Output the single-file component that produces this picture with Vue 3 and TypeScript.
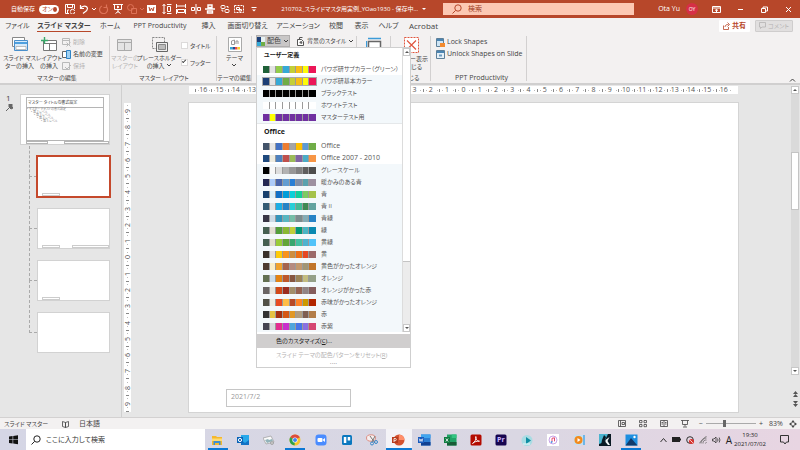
<script setup lang="ts">
import { ref } from 'vue'

interface Palette {
  name: string
  colors: string[]
  selected?: boolean
  tint?: boolean
}

const p = (name: string, colors: string, tint = false, selected = false): Palette => ({
  name,
  colors: colors.split(' ').map((c) => '#' + c),
  tint,
  selected,
})

const custom: Palette[] = [
  p('パワポ研サブカラー（グリーン）', '1f6138 e3e3e3 92cc4a 35a9d6 c3cf38 f8bd15 fdfb08 ec1758'),
  p('パワポ研基本カラー', '1b3e75 e3e3e3 35a9d6 70ad47 c3cf38 f8bd15 fdfb08 ec1758', true, true),
  p('ブラックテスト', '000000 000000 000000 000000 000000 000000 000000 000000', true),
  p('ホワイトテスト', 'ffffff ffffff ffffff ffffff ffffff ffffff ffffff ffffff', true),
  p('マスターテスト用', '7030a0 ffff00 7030a0 7030a0 7030a0 7030a0 7030a0 7030a0', true),
]

const office: Palette[] = [
  p('Office', '44546a e7e6e6 4472c4 ed7d31 a5a5a5 ffc000 5b9bd5 70ad47'),
  p('Office 2007 - 2010', '1f497d eeece1 4f81bd c0504d 9bbb59 8064a2 4bacc6 f79646'),
  p('グレースケール', '000000 f8f8f8 dddddd b2b2b2 969696 808080 5f5f5f 4d4d4d', true),
  p('暖かみのある青', '242852 accbf9 4a66ac 629dd1 297fd5 7f8fa9 5aa2ae 9d90a0', true),
  p('青', '17406d dbeff9 0f6fc6 009dd9 0bd0d9 10cf9b 7cca62 a5c249', true),
  p('青 II', '335b74 dfe3e5 1cade4 2683c6 27ced7 42ba97 3e8853 62a39f', true),
  p('青緑', '373545 cedbe6 3494ba 58b6c0 75bda7 7a8c8e 84acb6 2683c6', true),
  p('緑', '455f51 e3ded1 549e39 8ab833 c0cf3a 029676 4ab5c4 0989b1', true),
  p('黄緑', '455f51 e2dfcc 99cb38 63a537 37a76f 44c1a3 4eb3cf 51c3f9', true),
  p('黄', '39302a e5dedb ffca08 f8931d ce8d3e ec7016 e64823 9c6a6a', true),
  p('黄色がかったオレンジ', '4e3b30 fbeec9 f0a22e a5644e b58b80 c3986d a19574 c17529', true),
  p('オレンジ', '637052 ccddea e48312 bd582c 865640 9b8357 c2bc80 94a088', true),
  p('オレンジがかった赤', '696464 e9e5dc d34817 9b2d1f a28e6a 956251 918485 855d5d', true),
  p('赤味がかったオレンジ', '505046 eeece1 e84c22 ffbd47 b64926 ff8427 cc9900 b22600', true),
  p('赤', '323232 e5c243 a5300f d55816 e19825 b19c7d 7f5f52 b27d49', true),
  p('赤紫', '454551 d8d9dc e32d91 c830cc 4ea6dc 4775e7 8971e1 d54773', true),
]

const isLatin = (s: string): boolean => /^[\x20-\x7e]+$/.test(s)

const tabs = [
  'ファイル', 'スライド マスター', 'ホーム', 'PPT Productivity', '挿入', '画面切り替え',
  'アニメーション', '校閲', '表示', 'ヘルプ', 'Acrobat',
]
const activeTab = ref(1)

const quick = ['textframe', 'vdist', 'hdist', 'center', 'middle', 'swap', 'group', 'more']
const hRuler = Array.from({ length: 33 }, (_, i) => Math.abs(i - 16))
const vRuler = Array.from({ length: 19 }, (_, i) => Math.abs(i - 9))

const layouts = [
  { id: 1, selected: true, date: true, footer: false },
  { id: 2, selected: false, date: true, footer: true },
  { id: 3, selected: false, date: true, footer: false },
  { id: 4, selected: false, date: false, footer: false },
]

const apps = [
  { icon: 'explorer', label: 'エクスプローラー', open: true },
  { icon: 'outlook', label: 'Outlook' },
  { icon: 'photos', label: 'フォト' },
  { icon: 'chrome', label: 'Chrome', open: true },
  { icon: 'zoom', label: 'Zoom' },
  { icon: 'trello', label: 'Trello' },
  { icon: 'snip', label: 'Snipping Tool' },
  { icon: 'ppt', label: 'PowerPoint', open: true, active: true },
  { icon: 'word', label: 'Word' },
  { icon: 'excel', label: 'Excel' },
  { icon: 'acrobat', label: 'Acrobat' },
  { icon: 'premiere', label: 'Premiere' },
  { icon: 'player', label: 'Player' },
  { icon: 'itunes', label: 'iTunes' },
  { icon: 'media', label: 'Media Player' },
  { icon: 'kindle', label: 'Kindle' },
  { icon: 'picture', label: 'ピクチャ', open: true },
]

const showTitle = ref(false)
const showFooter = ref(true)
const autosave = ref(true)
const zoomLevel = ref(36)
</script>

<template>
  <svg class="defs" aria-hidden="true">
    <defs>
      <g id="chev"><path d="M1 2l2 2 2-2" fill="none" stroke="currentColor" /></g>
      <g id="save" fill="none" stroke="currentColor"><path d="M9.500 5V.5h-9v9H4M2.500.5v3h5v-3M2.500 9V6H4" /><path d="M5.500 7.500a2 2 0 0 1 4-.5M9.500 8a2 2 0 0 1-4 .5" /></g>
      <g id="undo" fill="none" stroke="currentColor"><path d="M1.500 1v3.500H5M1.500 4.500C3 1.500 8 1 8.500 4.500 8.500 7 6 8 4 9.500" stroke-width="1.200" /></g>
      <g id="redo" fill="none" stroke="currentColor"><path d="M7.500.5v3h-3M7 2.500A4 4 0 1 1 3 2" stroke-width="1.200" /></g>
      <g id="present" fill="none" stroke="currentColor"><path d="M0 .5h10M1.500.5v5h7v-5M5 5.500v3M2.500 9.500L5 7.500l2.500 2M4.500 2v2l1.500-1z" /></g>
      <g id="shapes" fill="none" stroke="currentColor"><circle cx="3.500" cy="3.500" r="3" /><path d="M4.500 4.500h5v5h-5z" /></g>
      <g id="textframe"><path d="M0 1h9v8H0z" fill="currentColor" /><path d="M2 3l1 4 1.500-3L6 7l1-4" fill="none" stroke="#b7472a" /></g>
      <g id="vdist" fill="none" stroke="currentColor"><path d="M2 0v10M.5 2L2 .5 3.500 2M.5 8L2 9.500 3.500 8M5 .5h4.500M5 9.500h4.500M5.500 2.500h3v5h-3z" /></g>
      <g id="hdist" fill="none" stroke="currentColor"><path d="M.5 0v4M9.500 0v4M.5 2h9M1.500 5.500h7v3h-7zM.5 5v5M9.500 5v5" /></g>
      <g id="center" fill="none" stroke="currentColor"><path d="M5 0v10M.5 3.500h3v3h-3zM6.500 3.500h3v3h-3z" /></g>
      <g id="middle" fill="none" stroke="currentColor"><path d="M0 5h10M3 1h4v2.500H3zM2.500 7h5v2h-5z" stroke-width="1.400" /></g>
      <g id="swap" fill="none" stroke="currentColor"><rect x="1" y="1.500" width="4" height="3" rx="1" /><rect x="5" y="5.500" width="4" height="3" rx="1" /><path d="M6.500 2.500h1.500v1.500M3.500 7H2V5.500" /></g>
      <g id="group" fill="none" stroke="currentColor"><path d="M.5 1.500h9v7h-9z" stroke-dasharray="2 1" /><path d="M2.500 3.500h3v2h-3zM5 5.500h2.500V7H5z" /></g>
      <g id="more"><path d="M2.500 3.500h5" stroke="currentColor" /><path d="M3 5.500h4L5 7.500z" fill="currentColor" /></g>
      <g id="lens" fill="none" stroke="currentColor"><circle cx="6" cy="4" r="3.200" /><path d="M3.600 6.400L.5 9.500" /></g>
      <g id="ribbonopt" fill="none" stroke="currentColor"><path d="M.5 1.500h8v6h-8zM.5 3h8M4.500 7V4.500M3 5.500l1.500-1 1.500 1" /></g>
      <g id="restore" fill="none" stroke="currentColor"><path d="M.5 2.500h4v4h-4zM2 2.500V1h4.500v4H5" /></g>
      <g id="close"><path d="M1 1l5 5M6 1L1 6" stroke="currentColor" /></g>
      <g id="share" fill="none" stroke="currentColor"><path d="M.5 3.500v4h5V5M2 5c0-2 1.500-2.500 3.500-2.500M4.500.5l2 2-2 2" stroke-width=".8" /></g>
      <g id="comment" fill="none" stroke="currentColor"><path d="M.5.500h6v4.500H3L1.500 6.500V5h-1z" stroke-width=".8" /></g>

      <g id="master"><path d="M.5.500h12v9H.5z" fill="#fff" stroke="#888" /><path d="M2.500 3.500h13v10h-13z" fill="#d7eafa" stroke="#4a8fcb" /><path d="M3 5h12v2H3z" fill="#4ea0df" /><path d="M4 9.500h10v3H4z" fill="#fff" stroke="#999" stroke-width=".6" /></g>
      <g id="layout"><path d="M2.500 3.500h13v10h-13z" fill="#fff" stroke="#777" /><path d="M3 6.500h12M8.500 7v6" stroke="#777" /><path d="M3.500 0v7M0 3.500h7" stroke="#39a869" stroke-width="1.400" /></g>
      <g id="mlayout"><path d="M.5 2.500h14v11H.5z" fill="#e4e4e4" stroke="#aaa" /><path d="M1 5.500h13M7.500 6v7" stroke="#aaa" /></g>
      <g id="holder"><path d="M.5.500h12v11H.5z" fill="none" stroke="#888" stroke-dasharray="2 1" /><path d="M4.500 5.500h11v9h-11z" fill="#eee" stroke="#666" /><path d="M6.500 7.500h7v5h-7z" fill="#bbb" stroke="#888" /></g>
      <g id="theme"><path d="M.5.500h13v14H.5z" fill="#fff" stroke="#aaa" /><path d="M3.500 7.500V4l3-1v4.500zM8 7V4h2v3" fill="none" stroke="#999" /><path d="M2 10h2.500v2.500H2z" fill="#35a9d6" /><path d="M4.500 10H7v2.500H4.500z" fill="#244d93" /><path d="M7 10h2.500v2.500H7z" fill="#e94b4b" /><path d="M9.500 10H12v2.500H9.500z" fill="#f5d32d" /></g>
      <g id="sdelete" fill="none" stroke="#b9b9b9"><path d="M.5.500h7v6h-7zM.5 2.500h7" /><path d="M4.500 4.500l4 4M8.500 4.500l-4 4" /></g>
      <g id="rename"><path d="M.5 1.500h5v6h-5z" fill="#fff" stroke="#666" /><path d="M4.500.5h4v8h-4z" fill="#9fd0f2" stroke="#2f83c5" /></g>
      <g id="keep" fill="none" stroke="#b9b9b9"><path d="M.5.500h7v7h-7z" /><path d="M3 5l2 2 4-4" /></g>
      <g id="palette"><path d="M0 0h4v5H0z" fill="#1d3f77" /><path d="M4 0h4v5H4z" fill="#e6f0f2" /><path d="M0 5h4v4H0z" fill="#35a9d6" /><path d="M4 5h4v4H4z" fill="#70ad47" /></g>
      <g id="bg"><path d="M1.500 2.500h4l2 2v4h-6z" fill="#fff" stroke="#555" /><path d="M3.500 6a1.500 1.500 0 1 1 2 1z" fill="#666" /><path d="M3.500 2V.5h3" fill="none" stroke="#555" /></g>
      <g id="size"><path d="M2.500 4.500h12v12h-12z" fill="#fff" stroke="#666" stroke-width="1.500" /><path d="M2 1.500h13M.5 4v11" stroke="#3c9bd8" stroke-width="1.300" /></g>
      <g id="closemaster" fill="none" stroke="#e0563f"><path d="M.5.500h14v15H.5z" fill="#fff" stroke-dasharray="2 1" /><path d="M3 3.500l9 9M12 3.500l-9 9" stroke-width="1.200" /></g>
      <g id="lock"><path d="M.5.500h7v8h-7z" fill="#cfe5f5" stroke="#5d7f99" /><path d="M1 1h6v2H1z" fill="#4a84b2" /><path d="M4 5h5v4H4z" fill="#f28a2e" /></g>
      <g id="unlock"><path d="M.5.500h8v8h-8z" fill="#e5f0f8" stroke="#5d7f99" /><path d="M1 1h7v2H1z" fill="#4a84b2" /><path d="M3 4.500h3v2H3z" fill="#6b9ac0" /></g>

      <g id="book" fill="none" stroke="currentColor"><path d="M.5 1.500l3 1v5l-3-1zM6.500 1.500l-3 1v5l3-1z" stroke-width=".8" /></g>
      <g id="vnormal" fill="none" stroke="currentColor"><path d="M.5.500h7v6h-7zM2.500.500v6M4 2.500h2.500v2H4z" stroke-width=".8" /></g>
      <g id="vsort" fill="none" stroke="currentColor"><path d="M.5.500h2.500v2.200H.5zM5 .5h2.500v2.200H5zM.5 4.500h2.500v2.200H.5zM5 4.500h2.500v2.200H5z" stroke-width=".8" /></g>
      <g id="vread" fill="none" stroke="currentColor"><path d="M.5.500h7v6h-7zM4 .5v6M1.500 2.500h1.500M1.500 4h1.500M5 2.500h1.500M5 4h1.500" stroke-width=".8" /></g>
      <g id="vshow" fill="none" stroke="currentColor"><path d="M0 .5h8M1.500.500v4h5v-4M4 4.500v2M2 7h4" stroke-width=".8" /></g>
      <g id="fit"><path d="M4 0l1.500 2h-3zM4 8l1.500-2h-3zM0 4l2-1.500v3zM8 4L6 2.500v3z" fill="currentColor" /><path d="M2.500 2.500h3v3h-3z" fill="none" stroke="currentColor" stroke-width=".6" /></g>

      <g id="win" fill="#111"><path d="M0 1.500L3.600 1v3.500H0zM4.200.9L9 .2v4.300H4.200zM0 5h3.600v3.500L0 8zM4.200 5H9v4.300l-4.800-.7z" /></g>
      <g id="explorer"><path d="M1 2h4l1 1h5v8H1z" fill="#f5b82e" /><path d="M1 4.500h10V7H1z" fill="#ffdc73" /><path d="M2.500 7h7v4H8V9H4v2H2.500z" fill="#3b8ed4" /></g>
      <g id="outlook"><path d="M4 1h8v10H4z" fill="#28a8ea" /><path d="M4 6l4 3 4-3v5H4z" fill="#1373c5" /><path d="M0 3h6v6H0z" fill="#0a64b8" /><circle cx="3" cy="6" r="1.600" fill="none" stroke="#fff" /></g>
      <g id="photos"><path d="M0 4l8-2 3 6-8 2z" fill="#fafafa" stroke="#999" stroke-width=".7" /><path d="M2 6l3-1 1 1 3-1 1 2-6 2z" fill="#92b3ba" /><circle cx="9" cy="9" r="1.500" fill="#ccc" stroke="#888" stroke-width=".6" /></g>
      <g id="chrome"><circle cx="6" cy="6" r="5.500" fill="#f7c52c" /><path d="M6 6L1.200 3.300a5.500 5.500 0 0 1 9.700 0z" fill="#dd4b3e" /><path d="M6 6l-.5 5.500A5.500 5.500 0 0 1 1.200 3.300z" fill="#2da04c" /><circle cx="6" cy="6" r="2.600" fill="#fff" /><circle cx="6" cy="6" r="2" fill="#4384f3" /></g>
      <g id="zoom"><rect x=".5" y=".5" width="11" height="11" rx="3" fill="#4a8cff" /><rect x="2.500" y="4" width="5" height="4" rx="1" fill="#fff" /><path d="M8 5.500L10 4v4L8 6.500z" fill="#fff" /></g>
      <g id="trello"><rect x="1" y="1" width="10" height="10" rx="1.500" fill="#0a78bf" /><path d="M2.800 3h2.500v6H2.800zM6.700 3h2.500v3.500H6.700z" fill="#fff" /></g>
      <g id="snip"><ellipse cx="5" cy="4" rx="4.500" ry="3.200" fill="#f7efef" stroke="#d9796a" stroke-width=".8" /><path d="M4 2l5 7M9 2L6 8" stroke="#777" /><circle cx="6" cy="9.500" r="1.500" fill="none" stroke="#3a87c8" /><circle cx="10" cy="8" r="1.500" fill="none" stroke="#3a87c8" /></g>
      <g id="ppt"><circle cx="7" cy="6" r="5.500" fill="#d35230" /><path d="M7 .5A5.500 5.500 0 0 1 12.500 6H7z" fill="#ff8f6b" /><path d="M0 3h6v6H0z" fill="#b83b1d" /><path d="M2 8V4.500h1.200a1 1 0 0 1 0 2.200H2" fill="none" stroke="#fff" stroke-width=".8" /></g>
      <g id="word"><path d="M3 .5h9.500v11H3z" fill="#2b7cd3" /><path d="M3 .5h9.500v3.500H3z" fill="#41a5ee" /><path d="M3 8h9.500v3.500H3z" fill="#103f91" /><path d="M0 3h6v6H0z" fill="#185abd" /><path d="M1.200 4.500l.8 3 1-2.500 1 2.500.8-3" fill="none" stroke="#fff" stroke-width=".7" /></g>
      <g id="excel"><path d="M3 .5h9.500v11H3z" fill="#21a366" /><path d="M7.700.500h4.800V4H7.700z" fill="#33c481" /><path d="M3 8h9.500v3.500H3z" fill="#185c37" /><path d="M0 3h6v6H0z" fill="#107c41" /><path d="M1.800 4.500l2.400 3M4.200 4.500l-2.400 3" stroke="#fff" stroke-width=".8" /></g>
      <g id="acrobat"><rect x=".5" y=".5" width="11" height="11" rx="1.500" fill="#b30b00" /><path d="M2.500 9.500C5 8 6.500 5 5.800 2.500 5.500 5 7 7.500 9.500 7.200 7 7 4.500 7.600 2.500 9.500z" fill="none" stroke="#fff" stroke-width=".9" /></g>
      <g id="premiere"><rect x=".5" y=".5" width="11" height="11" rx="1.500" fill="#17054f" /></g>
      <g id="player"><circle cx="6" cy="6.500" r="5.500" fill="#a9dce3" /><path d="M5 3l5 3.500L5 10z" fill="#0d8ea3" /><path d="M2 10l7 0" stroke="#e8f8fa" /></g>
      <g id="itunes"><rect x="0" y="0" width="12" height="12" fill="#fff" /><circle cx="6" cy="6" r="4" fill="none" stroke="#b98be0" stroke-width=".8" /><path d="M5 8V4.300l2.500-.5v3.500" fill="none" stroke="#e2466f" /><circle cx="4.600" cy="8" r=".9" fill="#4a9be8" /></g>
      <g id="media"><path d="M4 1h8v10H4z" fill="#6cb6e8" /><path d="M1 1h9v10H1z" fill="#c6dff2" /><circle cx="5.500" cy="6" r="4" fill="#f28a1c" /><path d="M4.500 4l3 2-3 2z" fill="#fff" /></g>
      <g id="kindle"><path d="M0 0h12v12H0z" fill="#0b1a24" /><path d="M0 0h9L6 6l-3 3-3 1z" fill="#4bb4cf" /><path d="M5 1l2 2-1 3-2 5H2l1-5z" fill="#0b1a24" /><path d="M6.500 6l4-3-2 4 2.500 4H9L6.500 8z" fill="#f3f7f8" /></g>
      <g id="picture"><path d="M.5.500h12v11H.5z" fill="#1e8fe0" /><path d="M.5 11.500L6 4l6.500 7.500z" fill="#123a6b" /><circle cx="9.500" cy="3" r="1.200" fill="#fff" /></g>
      <g id="battery"><path d="M0 1h8v5H0z" fill="#222" /><path d="M8 2.500h1v2H8z" fill="#222" /></g>
      <g id="cloud"><circle cx="4" cy="4" r="3.300" fill="none" stroke="#333" /><circle cx="5.500" cy="5.500" r="2.500" fill="#d9322e" /><path d="M4.200 4.200l2.600 2.600" stroke="#fff" stroke-width=".8" /></g>
      <g id="wifi" fill="none" stroke="#666"><path d="M0 7.500L7.500 0M2 7.500a5 5 0 0 1 5.500-5.500M4 7.500a3 3 0 0 1 3.500-3.500M6.500 7.500l1-1.500" stroke-width=".8" /></g>
      <g id="sound" fill="none" stroke="#333"><path d="M.5 3h1.500L4 1v6L2 5H.5zM5.500 2.500q1 1.500 0 3M7.200 1.500q1.500 2.500 0 5" stroke-width=".8" /></g>
      <g id="notice" fill="none" stroke="#333"><path d="M.5.500h8v6.500H6.500L5 9 3.500 7h-3z" /></g>
    </defs>
  </svg>

  <div class="app">
    <header class="titlebar">
      <div class="quick">
        <label class="autosave">自動保存
          <input v-model="autosave" type="checkbox" />
          <span class="toggle"><i>オン</i><b></b></span>
        </label>
        <button class="q" aria-label="保存"><svg width="10" height="10"><use href="#save" /></svg></button>
        <button class="q" aria-label="元に戻す"><svg width="10" height="10"><use href="#undo" /></svg></button>
        <button class="q slim" aria-label="履歴"><svg width="6" height="6"><use href="#chev" /></svg></button>
        <button class="q dim" aria-label="やり直し"><svg width="10" height="10"><use href="#redo" /></svg></button>
        <button class="q" aria-label="スライドショー"><svg width="10" height="10"><use href="#present" /></svg></button>
        <button class="q dim" aria-label="図形"><svg width="10" height="10"><use href="#shapes" /></svg></button>
        <button class="q slim dim" aria-label="図形の一覧"><svg width="6" height="6"><use href="#chev" /></svg></button>
        <div class="tools">
          <button v-for="i in quick" :key="i" class="q" :aria-label="i"><svg width="10" height="10"><use :href="'#' + i" /></svg></button>
        </div>
      </div>
      <div class="doc">210702_スライドマスタ用実例_YOao1930 - 保存中... <span class="tri"></span></div>
      <label class="find">
        <svg width="10" height="10"><use href="#lens" /></svg>
        <input type="text" placeholder="検索" aria-label="検索" />
      </label>
      <div class="account">
        <span>Ota Yu</span>
        <span class="avatar">OY</span>
        <button aria-label="リボンの表示オプション"><svg width="9" height="9"><use href="#ribbonopt" /></svg></button>
        <button aria-label="最小化"><svg width="7" height="7"><path d="M1 3.500h5" stroke="currentColor" /></svg></button>
        <button aria-label="元のサイズに戻す"><svg width="7" height="7"><use href="#restore" /></svg></button>
        <button aria-label="閉じる"><svg width="7" height="7"><use href="#close" /></svg></button>
      </div>
    </header>

    <div class="tabbar">
      <nav class="tabs">
        <button v-for="(t, i) in tabs" :key="t" :class="{ on: i === activeTab }" @click="activeTab = i"><span>{{ t }}</span></button>
      </nav>
      <button class="share"><svg width="7" height="8"><use href="#share" /></svg>共有</button>
      <button class="comment" disabled><svg width="7" height="7"><use href="#comment" /></svg>コメント</button>
    </div>

    <section class="ribbon">
      <div class="group g1">
        <div class="body">
          <button class="big"><svg width="16" height="15"><use href="#master" /></svg><span>スライド マス<br />ターの挿入</span></button>
          <button class="big"><svg width="16" height="15"><use href="#layout" /></svg><span>レイアウト<br />の挿入</span></button>
          <div class="stack">
            <button disabled><svg width="9" height="9"><use href="#sdelete" /></svg>削除</button>
            <button><svg width="9" height="9"><use href="#rename" /></svg>名前の変更</button>
            <button disabled><svg width="9" height="9"><use href="#keep" /></svg>保持</button>
          </div>
        </div>
        <h2>マスターの編集</h2>
      </div>
      <div class="group g2">
        <div class="body">
          <button class="big" disabled><svg width="16" height="15"><use href="#mlayout" /></svg><span>マスターの<br />レイアウト</span></button>
          <button class="big"><svg width="16" height="15"><use href="#holder" /></svg><span>プレースホルダー<br />の挿入 <svg width="6" height="6"><use href="#chev" /></svg></span></button>
          <div class="checks">
            <label><input v-model="showTitle" type="checkbox" />タイトル</label>
            <label><input v-model="showFooter" type="checkbox" />フッター</label>
          </div>
        </div>
        <h2>マスター レイアウト</h2>
      </div>
      <div class="group g3">
        <div class="body">
          <button class="big"><svg width="14" height="15"><use href="#theme" /></svg><span>テーマ<br /><svg width="6" height="6"><use href="#chev" /></svg></span></button>
        </div>
        <h2>テーマの編集</h2>
      </div>
      <div class="group g4">
        <div class="body">
          <div class="dropdown">
            <button class="pressed"><svg width="8" height="9"><use href="#palette" /></svg>配色<svg width="6" height="6"><use href="#chev" /></svg></button>
            <div class="menu">
              <div class="scroller">
                <div class="lists">
                  <h3>ユーザー定義</h3>
                  <ul>
                    <li v-for="c in custom" :key="c.name">
                      <button :class="{ tint: c.tint, sel: c.selected }">
                        <span class="sw"><i v-for="(k, n) in c.colors" :key="n" :style="{ background: k }"></i></span>{{ c.name }}
                      </button>
                    </li>
                  </ul>
                  <h3 class="ruled">Office</h3>
                  <ul>
                    <li v-for="c in office" :key="c.name">
                      <button :class="{ tint: c.tint, latin: isLatin(c.name) }">
                        <span class="sw"><i v-for="(k, n) in c.colors" :key="n" :style="{ background: k }"></i></span>{{ c.name }}
                      </button>
                    </li>
                  </ul>
                </div>
                <div class="mbar">
                  <button class="arrow up" aria-label="上へ"></button>
                  <div class="mthumb"></div>
                  <button class="arrow down" aria-label="下へ"></button>
                </div>
              </div>
              <button class="cmd hot">色のカスタマイズ(<u>C</u>)...</button>
              <button class="cmd" disabled>スライド テーマの配色パターンをリセット(<u>R</u>)</button>
              <div class="grip">....</div>
            </div>
          </div>
          <button class="flat"><svg width="9" height="9"><use href="#bg" /></svg>背景のスタイル<svg width="6" height="6"><use href="#chev" /></svg></button>
        </div>
      </div>
      <div class="group g5">
        <div class="body"><button class="big" aria-label="サイズ"><svg width="16" height="18"><use href="#size" /></svg></button></div>
      </div>
      <div class="group g6">
        <div class="body"><button class="big"><svg width="15" height="16"><use href="#closemaster" /></svg><span>マスター表示<br />を閉じる</span></button></div>
        <h2>閉じる</h2>
      </div>
      <div class="group g7">
        <div class="body">
          <div class="stack">
            <button><svg width="9" height="9"><use href="#lock" /></svg>Lock Shapes</button>
            <button><svg width="9" height="9"><use href="#unlock" /></svg>Unlock Shapes on Slide</button>
          </div>
        </div>
        <h2>PPT Productivity</h2>
      </div>
      <button class="collapse" aria-label="リボンを折りたたむ"><svg width="7" height="6"><path d="M1 4.500l2.500-2.500L6 4.500" fill="none" stroke="currentColor" /></svg></button>
    </section>

    <main class="work">
      <aside class="panel">
        <div class="num">1<svg width="7" height="7"><path d="M3 0h3v3l1 1-2 1-2-2zM3.500 3.500L0 7" fill="#666" stroke="#666" /></svg></div>
        <div class="tree">
          <button class="thumb master" aria-label="マスター">
            <span class="mt">マスター タイトルの書式設定</span>
            <span class="mb">• マスター テキストの書式設定<i>• 第 2 レベル</i><i>• 第 3 レベル</i><i>• 第 4 レベル</i><i>• 第 5 レベル</i></span>
            <span class="mf"><i></i><i></i></span>
          </button>
          <ul class="layouts">
            <li v-for="l in layouts" :key="l.id">
              <button class="thumb" :class="{ current: l.selected }" :aria-label="'レイアウト ' + l.id">
                <i v-if="l.date" class="d"></i><i v-if="l.footer" class="f"></i>
              </button>
            </li>
          </ul>
        </div>
      </aside>
      <div class="stage">
        <div class="hr"><span v-for="(n, i) in hRuler" :key="i">{{ n }}</span></div>
        <div class="vr"><span v-for="(n, i) in vRuler" :key="i">{{ n }}</span></div>
        <div class="slide"><div class="date">2021/7/2</div></div>
        <div class="vbar">
          <button class="arrow up" aria-label="上へ"></button>
          <div class="vthumb"></div>
          <button class="arrow down" aria-label="下へ"></button>
          <div class="jump">
            <button aria-label="前のスライド"><svg width="5" height="6"><path d="M0 3l2.500-3L5 3zM0 6l2.500-3L5 6z" fill="#555" /></svg></button>
            <button aria-label="次のスライド"><svg width="5" height="6"><path d="M0 0h5L2.500 3zM0 3h5L2.500 6z" fill="#555" /></svg></button>
          </div>
        </div>
      </div>
    </main>

    <footer class="status">
      <span class="mode">スライド マスター</span>
      <svg width="8" height="8"><use href="#book" /></svg>
      <span class="lang">日本語</span>
      <div class="views">
        <button aria-label="標準"><svg width="8" height="8"><use href="#vnormal" /></svg></button>
        <button aria-label="一覧"><svg width="8" height="8"><use href="#vsort" /></svg></button>
        <button aria-label="閲覧"><svg width="8" height="8"><use href="#vread" /></svg></button>
        <button aria-label="スライドショー"><svg width="8" height="8"><use href="#vshow" /></svg></button>
      </div>
      <div class="zoom">
        <button aria-label="縮小">−</button>
        <input v-model="zoomLevel" type="range" min="0" max="100" aria-label="ズーム" />
        <button aria-label="拡大">+</button>
      </div>
      <span class="pct">83%</span>
      <button aria-label="ウィンドウに合わせる"><svg width="8" height="8"><use href="#fit" /></svg></button>
    </footer>

    <footer class="taskbar">
      <button class="start" aria-label="スタート"><svg width="9" height="10"><use href="#win" /></svg></button>
      <label class="ask">
        <svg width="10" height="10"><use href="#lens" /></svg>
        <input type="text" placeholder="ここに入力して検索" aria-label="ここに入力して検索" />
      </label>
      <nav class="apps">
        <button v-for="a in apps" :key="a.icon" :class="{ open: a.open, active: a.active }" :aria-label="a.label">
          <svg width="13" height="12"><use :href="'#' + a.icon" /><text v-if="a.icon === 'premiere'" x="2" y="8" class="pr">Pr</text></svg>
        </button>
      </nav>
      <div class="tray">
        <svg width="7" height="6"><path d="M.5 5l3-3.500 3 3.500" fill="none" stroke="#333" /></svg>
        <svg width="9" height="8"><use href="#battery" /></svg>
        <svg width="8" height="8"><use href="#cloud" /></svg>
        <svg width="8" height="8"><use href="#wifi" /></svg>
        <svg width="9" height="8"><use href="#sound" /></svg>
        <span class="ime">A</span>
      </div>
      <div class="clock">19:30<br />2021/07/02</div>
      <button class="notice" aria-label="通知"><svg width="9" height="9"><use href="#notice" /></svg></button>
    </footer>
  </div>
</template>

<style>
body {
  margin: 0;
  background: #e6e6e6;
}
</style>

<style scoped>
.defs {
  position: absolute;
  width: 0;
  height: 0;
}
.app {
  display: flex;
  flex-direction: column;
  min-height: 100vh;
  font-family: "Open Sans", "Noto Sans CJK JP", sans-serif;
  font-feature-settings: "palt";
  font-size: 7px;
  line-height: 8px;
  color: #444;
  white-space: nowrap;
}
.app *,
.app *::before,
.app *::after {
  box-sizing: border-box;
}
button,
input {
  font: inherit;
  font-feature-settings: inherit;
  color: inherit;
  background: none;
  border: 0;
  padding: 0;
  margin: 0;
  min-width: 0;
}
button {
  display: flex;
  align-items: center;
  justify-content: center;
  white-space: nowrap;
}
svg {
  flex: none;
}
ul,
h2,
h3 {
  list-style: none;
  margin: 0;
  padding: 0;
  font-size: 7px;
  font-weight: 400;
}
i {
  font-style: normal;
}

.titlebar {
  display: grid;
  grid-template-columns: 264px 179px 1fr 166px;
  align-items: center;
  height: 18px;
  background: #b7472a;
  color: #fff;
}
.quick {
  display: flex;
  align-items: center;
  padding-left: 11px;
}
.autosave {
  display: flex;
  align-items: center;
  justify-content: space-between;
  width: 48px;
  margin-right: 4px;
  font-size: 6px;
}
.autosave input {
  position: absolute;
  opacity: 0;
}
.toggle {
  display: flex;
  align-items: center;
  justify-content: space-between;
  width: 20px;
  height: 9px;
  padding: 0 2px 0 3px;
  border-radius: 5px;
  background: #fff;
  color: #b7472a;
  font-size: 6px;
}
.toggle b {
  width: 5px;
  height: 5px;
  border-radius: 50%;
  background: #b7472a;
}
.q {
  width: 14px;
  height: 14px;
}
.slim {
  width: 6px;
}
.dim {
  color: #dd7257;
}
.tools {
  display: grid;
  grid-template-columns: repeat(8, 1fr);
  width: 116px;
}
.tools .q {
  width: auto;
}
.doc {
  text-align: center;
  font-size: 6px;
}
.tri {
  display: inline-block;
  margin-left: 2px;
  border: 2px solid transparent;
  border-top-color: #fff;
  border-bottom: 0;
  vertical-align: middle;
}
.find {
  display: flex;
  align-items: center;
  gap: 6px;
  height: 12px;
  padding-left: 9px;
  background: #fcc8b3;
  color: #b7472a;
}
.find input {
  flex: 1;
}
.find input::placeholder {
  color: #9c3b22;
  opacity: 1;
}
.account {
  display: grid;
  grid-template-columns: 46px 24px repeat(4, 24px);
  align-items: center;
  justify-items: end;
}
.account button {
  width: 24px;
  height: 18px;
}
.avatar {
  justify-self: center;
  width: 12px;
  height: 12px;
  border-radius: 50%;
  background: #d62f46;
  font-size: 5px;
  line-height: 12px;
  text-align: center;
}

.tabbar {
  display: flex;
  align-items: center;
  height: 15px;
  padding: 0 7px 0 2px;
  background: #f3f1f1;
}
.tabs {
  display: grid;
  grid-template-columns: 31px 62px 30px 70px 27px 51px 50px 26px 25px 29px 41px;
  margin-right: auto;
}
.tabs button {
  height: 15px;
}
.tabs button:last-child {
  font-size: 8px;
}
.tabs span {
  height: 13px;
  line-height: 14px;
  border-bottom: 1px solid transparent;
}
.tabs .on {
  font-weight: 700;
}
.tabs .on span {
  border-color: #b7472a;
}
.share,
.comment {
  gap: 2px;
  height: 12px;
  border-radius: 1px;
}
.share {
  width: 31px;
  margin-right: 5px;
  background: #fff;
  color: #b7472a;
  font-weight: 700;
}
.comment {
  width: 38px;
  border: 1px solid #cfcdcd;
  background: #e1dfdf;
  color: #a6a4a4;
  font-size: 6px;
}

.ribbon {
  display: flex;
  height: 52px;
  border-bottom: 2px solid #d0cfcf;
  background: #f3f1f1;
}
.group {
  position: relative;
  display: flex;
  flex-direction: column;
  justify-content: space-between;
  padding: 2px 0 0;
}
.group::after {
  content: "";
  position: absolute;
  top: 3px;
  right: 0;
  bottom: 2px;
  border-right: 1px solid #d2d0d0;
}
.group h2 {
  height: 10px;
  font-size: 6px;
  line-height: 10px;
  text-align: center;
}
.g7 h2 {
  font-size: 7px;
}
.body {
  display: flex;
}
.g1 { width: 110px; padding-left: 4px; }
.g2 { width: 107px; padding-left: 1px; }
.g3 { width: 35px; }
.g4 { width: 105px; padding-left: 4px; }
.g5 { width: 34px; }
.g6 { width: 40px; }
.g7 { width: 96px; padding-left: 5px; }
.g3 .body,
.g5 .body,
.g6 .body {
  justify-content: center;
}
.big {
  flex-direction: column;
  justify-content: flex-start;
  gap: 2px;
  width: 29px;
  padding-top: 2px;
  line-height: 8px;
  font-size: 6px;
}
.g1 .big:first-child {
  width: 31px;
}
.g1 .big + .big {
  width: 27px;
  padding-left: 1px;
}
.g2 .big {
  width: 28px;
}
.g2 .big + .big {
  width: 40px;
  padding-left: 1px;
}
button:disabled {
  color: #b5b3b3;
}
.stack {
  display: grid;
  grid-auto-rows: 12px;
  padding-top: 1px;
}
.stack button {
  justify-content: flex-start;
  gap: 2px;
}
.g1 .stack button {
  font-size: 6px;
}
.checks {
  display: grid;
  grid-auto-rows: 17px;
  align-items: center;
  padding: 2px 0 0 2px;
  font-size: 6px;
}
.checks label {
  display: flex;
  align-items: center;
  gap: 2px;
}
.checks input {
  appearance: none;
  width: 7px;
  height: 7px;
  border: 1px solid #dcdada;
  background: #fff;
}
.checks input:checked::after {
  content: "";
  display: block;
  width: 4px;
  height: 2px;
  border: solid #444;
  border-width: 0 0 1px 1px;
  transform: rotate(-45deg);
}
.dropdown {
  position: relative;
}
.pressed {
  gap: 2px;
  width: 34px;
  height: 12px;
  border: 1px solid #b0aeae;
  background: #c9c7c7;
  font-size: 7px;
}
.flat {
  gap: 2px;
  height: 12px;
  padding-left: 6px;
  font-size: 6px;
}
.collapse {
  align-self: flex-end;
  margin-left: auto;
  padding: 0 4px 0 0;
}

.menu {
  position: absolute;
  z-index: 5;
  top: 100%;
  left: 0;
  width: 155px;
  border: 1px solid #cfcfcf;
  background: #fff;
}
.scroller {
  display: grid;
  grid-template-columns: minmax(0, 1fr) 8px;
  padding-bottom: 2px;
}
.lists h3 {
  height: 15px;
  padding-left: 7px;
  font-size: 6px;
  font-weight: 700;
  line-height: 15px;
  color: #222;
}
.lists .ruled {
  height: 17px;
  border-top: 1px solid #e5e8ea;
  font-size: 7px;
}
.lists li button {
  justify-content: flex-start;
  gap: 5px;
  width: 100%;
  height: 12px;
  padding-left: 6px;
  font-size: 6px;
  line-height: 12px;
  color: #555;
}
.lists li .latin {
  font-size: 7px;
}
.lists .tint {
  background: #f3f8fb;
}
.sw {
  display: grid;
  grid-template-columns: repeat(8, 1fr);
  flex: none;
  width: 53px;
  height: 7px;
  background: #999;
}
.sw i {
  border: solid #9a9a9a;
  border-width: 0 1px 0 0;
}
.sw i:last-child {
  border: 0;
}
.sel .sw {
  outline: 1px solid #aaa;
}
.mbar {
  display: flex;
  flex-direction: column;
  border-left: 1px solid #dcdcdc;
  background: #ececec;
}
.mthumb {
  height: 206px;
  margin-bottom: auto;
  border-bottom: 1px solid #c4c4c4;
  background: #fff;
}
.arrow {
  width: 7px;
  height: 8px;
  border: 1px solid #c8c8c8;
  background: #fff;
}
.arrow::after {
  content: "";
  border: 2px solid transparent;
}
.arrow.up::after {
  border-bottom-color: #555;
  border-top: 0;
}
.arrow.down::after {
  border-top-color: #555;
  border-bottom: 0;
}
.cmd {
  justify-content: flex-start;
  width: 100%;
  height: 14px;
  padding-left: 19px;
  font-size: 6px;
}
.cmd:disabled {
  height: 13px;
}
.hot {
  background: #d0cece;
  color: #222;
}
.grip {
  height: 6px;
  line-height: 2px;
  text-align: center;
  color: #999;
}

.work {
  display: flex;
  flex: 1;
  background: #e6e6e6;
}
.panel {
  display: flex;
  gap: 2px;
  width: 122px;
  padding: 9px 0 0 6px;
  border-right: 1px solid #cfcfcf;
}
.num {
  display: flex;
  flex-direction: column;
  gap: 2px;
  width: 12px;
  font-size: 8px;
}
.thumb {
  display: block;
  position: relative;
  border: 1px solid #d2d2d2;
  background: #fff;
}
.master {
  width: 90px;
  height: 51px;
  padding: 2px 5px 0;
  font-size: 4px;
  line-height: 4px;
  text-align: left;
}
.mt,
.mb {
  display: block;
  border: 1px solid #b5b5b5;
}
.mt {
  height: 11px;
  padding-left: 1px;
  line-height: 9px;
}
.mb {
  height: 33px;
  border-top: 0;
  font-size: 3px;
  line-height: 3px;
  color: #888;
}
.mb i {
  display: block;
  padding-left: 4px;
}
.mb i:nth-child(2) { padding-left: 7px; }
.mb i:nth-child(3) { padding-left: 10px; }
.mb i:nth-child(4) { padding-left: 14px; }
.mf {
  display: flex;
  justify-content: space-between;
  margin-right: -5px;
}
.mf i {
  width: 22px;
  height: 3px;
  border: 1px solid #b5b5b5;
}
.mf i + i {
  width: 45px;
}
.layouts {
  display: grid;
  gap: 11px;
  padding: 11px 0 0 17px;
}
.layouts li {
  position: relative;
}
.layouts li::before {
  content: "";
  position: absolute;
  top: -32px;
  left: -8px;
  width: 8px;
  height: 53px;
  border: dashed #aaa;
  border-width: 0 0 1px 1px;
}
.layouts li:first-child::before {
  top: -10px;
  height: 31px;
}
.layouts .thumb {
  width: 73px;
  height: 41px;
}
.layouts .current {
  outline: 1px solid #c5492c;
  border-color: #c5492c;
}
.d,
.f {
  position: absolute;
  bottom: 0;
  height: 3px;
  border: 1px solid #ccc;
}
.d {
  left: 4px;
  width: 18px;
}
.f {
  right: 0;
  width: 37px;
}

.stage {
  flex: 1;
  display: grid;
  grid-template-columns: 7px 58px 1fr 53px 8px;
  grid-template-rows: 8px 1fr;
  row-gap: 9px;
  padding: 1px 1px 0 2px;
}
.hr,
.vr {
  display: flex;
  background: #fff;
  color: #555;
}
.hr {
  grid-column: 3;
  padding: 0 6px;
}
.hr span,
.vr span {
  flex: 1;
  text-align: center;
  min-width: 0;
}
.hr span {
  background:
    linear-gradient(#888, #888) 0 50% / 1px 3px no-repeat,
    linear-gradient(#bbb, #bbb) 3px 50% / 1px 1px no-repeat,
    linear-gradient(#bbb, #bbb) 14px 50% / 1px 1px no-repeat;
}
.vr {
  grid-area: 2 / 1;
  margin-bottom: 5px;
  writing-mode: vertical-rl;
  transform: rotate(180deg);
  line-height: 7px;
}
.vr span {
  background:
    linear-gradient(#888, #888) 50% 0 / 3px 1px no-repeat,
    linear-gradient(#bbb, #bbb) 50% 4px / 1px 1px no-repeat,
    linear-gradient(#bbb, #bbb) 50% 13px / 1px 1px no-repeat;
}
.slide {
  grid-area: 2 / 3;
  display: flex;
  align-items: flex-end;
  margin-bottom: 5px;
  padding: 0 0 5px 37px;
  background: #fff;
  box-shadow: 0 0 0 1px #d4d4d4;
}
.date {
  width: 125px;
  height: 18px;
  padding-left: 4px;
  border: 1px solid #c6c6c6;
  line-height: 14px;
  color: #999;
}
.vbar {
  grid-area: 1 / 5 / 3;
  display: flex;
  flex-direction: column;
  background: #dadada;
}
.vbar .arrow {
  width: 8px;
}
.vthumb {
  height: 58px;
  margin: 58px 0 auto;
  border: 1px solid #c4c4c4;
  background: #fff;
}
.jump {
  display: grid;
  gap: 4px;
  padding: 16px 0 10px 1px;
  background: #e6e6e6;
}

.status {
  display: flex;
  align-items: center;
  height: 12px;
  padding: 0 3px 0 4px;
  border-top: 1px solid #d3d1d1;
  background: #f3f1f1;
}
.mode {
  width: 58px;
  font-size: 6px;
}
.lang {
  padding-left: 9px;
}
.views {
  display: flex;
  gap: 13px;
  margin-left: auto;
}
.zoom {
  display: flex;
  align-items: center;
  gap: 3px;
  padding-left: 10px;
}
.zoom input {
  appearance: none;
  width: 50px;
  height: 8px;
  background: linear-gradient(#aaa, #aaa) center / 100% 1px no-repeat;
}
.zoom input::-webkit-slider-thumb {
  appearance: none;
  width: 3px;
  height: 7px;
  background: #666;
}
.pct {
  width: 26px;
  padding-left: 6px;
}

.taskbar {
  display: flex;
  height: 21px;
  background: linear-gradient(90deg, #d5d6e5, #dad7e3 65%, #e8d5e2);
  color: #222;
}
.start {
  width: 26px;
}
.ask {
  display: flex;
  align-items: center;
  gap: 5px;
  width: 179px;
  padding-left: 5px;
  background: #fff;
}
.ask input {
  flex: 1;
}
.ask input::placeholder {
  color: #333;
  opacity: 1;
}
.apps {
  display: grid;
  grid-template-columns: repeat(17, 1fr);
  width: 439px;
}
.apps .open {
  background: linear-gradient(#0b78d4, #0b78d4) bottom / 20px 2px no-repeat;
}
.apps .active {
  background: linear-gradient(#0b78d4, #0b78d4) bottom / 100% 2px no-repeat #f4f3f7;
}
.pr {
  font-size: 7px;
  font-weight: 700;
  fill: #c9b8ff;
}
.tray {
  display: flex;
  align-items: center;
  gap: 5px;
  margin-left: auto;
}
.ime {
  font-size: 10px;
}
.clock {
  width: 36px;
  padding-top: 2px;
  font-size: 6px;
  line-height: 9px;
  text-align: center;
}
.notice {
  width: 32px;
}
</style>
